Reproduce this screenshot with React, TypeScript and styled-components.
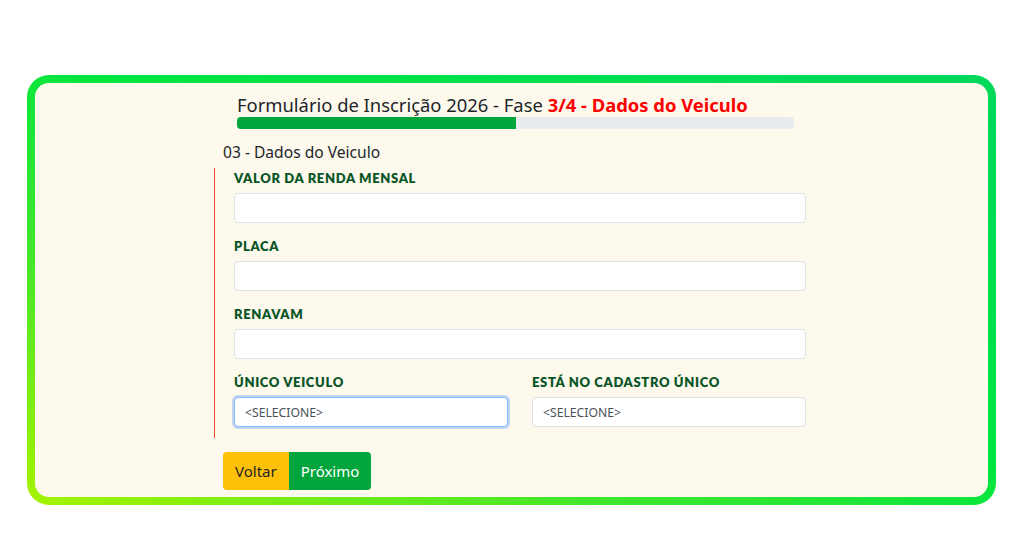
import React from "react";
import styled, { createGlobalStyle } from "styled-components";

const Global = createGlobalStyle`
  html, body { margin: 0; padding: 0; background: #ffffff; }
  body { font-family: "Noto Sans", "Open Sans", sans-serif; }
  * { box-sizing: border-box; }
`;

const Page = styled.div`
  width: 1024px;
  height: 536px;
  padding: 75px 0 0 27px;
`;

const CardFrame = styled.div`
  width: 969px;
  height: 430px;
  padding: 8px;
  border-radius: 22px;
  background: linear-gradient(to top right, #a6f300 0%, #40e62c 30%, #00e640 55%, #00d85c 100%);
`;

const CardBody = styled.div`
  width: 100%;
  height: 100%;
  border-radius: 14px;
  background: #fdf9ed;
  padding: 10px 0 0 179px;
`;

const Column = styled.div`
  width: 600px;
  display: flex;
  flex-direction: column;
`;

const Title = styled.h1`
  margin: 0 0 0 23px;
  font-size: 18.4px;
  line-height: 24px;
  font-weight: 400;
  color: #212529;
  white-space: nowrap;
`;

const Highlight = styled.span`
  color: #ff0000;
  font-weight: 700;
`;

const Progress = styled.div`
  margin-left: 23px;
  width: 557px;
  height: 12px;
  border-radius: 4px;
  background: #e9ecef;
  overflow: hidden;
`;

const ProgressFill = styled.div`
  height: 100%;
  background: #00a63c;
`;

const SectionHeading = styled.h2`
  margin: 11px 0 0 9px;
  font-size: 15.6px;
  line-height: 24px;
  font-weight: 400;
  color: #212529;
`;

const Fieldset = styled.div`
  margin-top: 4px;
  border-left: 1px solid #e8472c;
  padding: 2px 0 11px 19px;
  display: flex;
  flex-direction: column;
  gap: 15px;
`;

const Row = styled.div`
  display: flex;
  gap: 24px;
`;

const Field = styled.div<{ $width: number }>`
  width: ${(p) => p.$width}px;
  display: flex;
  flex-direction: column;
  gap: 7px;
`;

const Label = styled.label`
  font-family: "Lato", "Noto Sans", sans-serif;
  font-weight: 800;
  font-size: 13px;
  line-height: 16px;
  letter-spacing: 0.65px;
  color: #0a5527;
  text-transform: uppercase;
  white-space: nowrap;
`;

const Input = styled.div`
  height: 30px;
  background: #ffffff;
  border: 1px solid #dee2e6;
  border-radius: 4px;
`;

const Select = styled.div<{ $focused?: boolean }>`
  height: 30px;
  background: #ffffff;
  border: 1px solid ${(p) => (p.$focused ? "#86b7fe" : "#dee2e6")};
  border-radius: 4px;
  box-shadow: ${(p) => (p.$focused ? "0 0 0 2px rgba(13,110,253,0.25)" : "none")};
  padding: 0 10px;
  display: flex;
  align-items: center;
  font-size: 12.2px;
  color: #495057;
`;

const Buttons = styled.div`
  margin: 14px 0 0 9px;
  display: flex;
`;

const Button = styled.button<{ $variant: "back" | "next" }>`
  height: 38px;
  border: none;
  padding: 0 12px;
  font-family: "Noto Sans", "Open Sans", sans-serif;
  font-size: 15px;
  line-height: 38px;
  cursor: pointer;
  background: ${(p) => (p.$variant === "back" ? "#ffc107" : "#00a63c")};
  color: ${(p) => (p.$variant === "back" ? "#212529" : "#ffffff")};
  border-radius: ${(p) => (p.$variant === "back" ? "4px 0 0 4px" : "0 4px 4px 0")};
`;

export default function App() {
  return (
    <Page>
      <Global />
      <CardFrame>
        <CardBody>
          <Column>
            <Title>
              Formulário de Inscrição 2026 - Fase <Highlight>3/4 - Dados do Veiculo</Highlight>
            </Title>
            <Progress>
              <ProgressFill style={{ width: "50%" }} />
            </Progress>
            <SectionHeading>03 - Dados do Veiculo</SectionHeading>
            <Fieldset>
              <Field $width={572}>
                <Label>Valor da Renda Mensal</Label>
                <Input />
              </Field>
              <Field $width={572}>
                <Label>Placa</Label>
                <Input />
              </Field>
              <Field $width={572}>
                <Label>Renavam</Label>
                <Input />
              </Field>
              <Row>
                <Field $width={274}>
                  <Label>Único Veiculo</Label>
                  <Select $focused>&lt;SELECIONE&gt;</Select>
                </Field>
                <Field $width={274}>
                  <Label>Está no Cadastro Único</Label>
                  <Select>&lt;SELECIONE&gt;</Select>
                </Field>
              </Row>
            </Fieldset>
            <Buttons>
              <Button $variant="back">Voltar</Button>
              <Button $variant="next">Próximo</Button>
            </Buttons>
          </Column>
        </CardBody>
      </CardFrame>
    </Page>
  );
}
